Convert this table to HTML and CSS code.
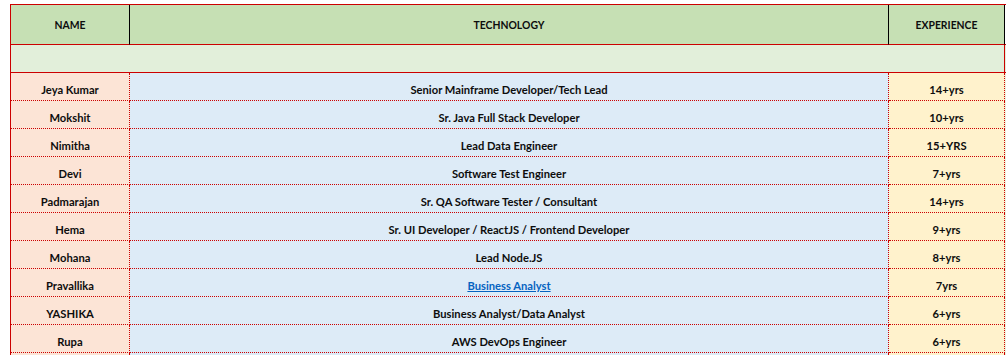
FILE: index.html
```html
<!DOCTYPE html>
<html>
<head>
<meta charset="utf-8">
<link rel="stylesheet" href="styles.css">
</head>
<body>
<div class="sheet">
  <div class="cell head c1">NAME</div>
  <div class="cell head c2">TECHNOLOGY</div>
  <div class="cell head c3">EXPERIENCE</div>
  <div class="cell head c4"></div>

  <div class="cell blank"></div>
  <div class="cell blank-x"></div>

  <div class="cell name">Jeya Kumar</div><div class="cell tech">Senior Mainframe Developer/Tech Lead</div><div class="cell exp">14+yrs</div><div class="cell extra"></div>
  <div class="cell name">Mokshit</div><div class="cell tech">Sr. Java Full Stack Developer</div><div class="cell exp">10+yrs</div><div class="cell extra"></div>
  <div class="cell name">Nimitha</div><div class="cell tech">Lead Data Engineer</div><div class="cell exp">15+YRS</div><div class="cell extra"></div>
  <div class="cell name">Devi</div><div class="cell tech">Software Test Engineer</div><div class="cell exp">7+yrs</div><div class="cell extra"></div>
  <div class="cell name">Padmarajan</div><div class="cell tech">Sr. QA Software Tester / Consultant</div><div class="cell exp">14+yrs</div><div class="cell extra"></div>
  <div class="cell name">Hema</div><div class="cell tech">Sr. UI Developer / ReactJS / Frontend Developer</div><div class="cell exp">9+yrs</div><div class="cell extra"></div>
  <div class="cell name">Mohana</div><div class="cell tech">Lead Node.JS</div><div class="cell exp">8+yrs</div><div class="cell extra"></div>
  <div class="cell name">Pravallika</div><div class="cell tech"><a class="link" href="#">Business Analyst</a></div><div class="cell exp">7yrs</div><div class="cell extra"></div>
  <div class="cell name">YASHIKA</div><div class="cell tech">Business Analyst/Data Analyst</div><div class="cell exp">6+yrs</div><div class="cell extra"></div>
  <div class="cell name">Rupa</div><div class="cell tech">AWS DevOps Engineer</div><div class="cell exp">6+yrs</div><div class="cell extra"></div>
  <div class="cell name tail"></div><div class="cell tech tail"></div><div class="cell exp tail"></div><div class="cell extra tail"></div>
</div>
</body>
</html>
```
FILE: styles.css
```css
html, body {
  margin: 0;
  padding: 0;
  background: #ffffff;
  overflow: hidden;
}
body {
  width: 1006px;
  height: 355px;
  font-family: "Lato", "Liberation Sans", sans-serif;
  font-weight: 700;
  font-size: 11.2px;
  color: #0d0d0d;
}
.sheet {
  margin: 4px 0 0 10px;
  display: grid;
  grid-template-columns: 119px 759px 116px 40px;
  grid-template-rows: 40px 28px;
  grid-auto-rows: 28px;
  border-top: 1px solid #cc0000;
  border-left: 1px solid #cc0000;
  width: 1034px;
  height: 350px;
  overflow: hidden;
}
.cell {
  display: flex;
  justify-content: center;
  align-items: flex-end;
  padding-bottom: 4px;
  line-height: 12px;
  white-space: nowrap;
  box-sizing: border-box;
}
.head {
  background: #c6e0b4;
  align-items: center;
  padding-bottom: 0;
  font-size: 10.4px;
  border-right: 1px solid #000000;
  border-bottom: 1px solid #cc0000;
}
.head.c4 {
  background: #ffffff;
  border-right: none;
}
.blank {
  grid-column: 1 / 4;
  background: #e2efda;
  border-right: 1px solid #cc0000;
  border-bottom: 1px solid #cc0000;
}
.blank-x {
  background: #e2efda;
  border-bottom: 1px solid #cc0000;
}
.name, .tech, .exp {
  border-right: 1px dotted #cc0000;
  border-bottom: 1px dotted #cc0000;
}
.name { background: #fce4d6; }
.tech { background: #ddebf7; }
.exp { background: #fff2cc; }
.extra { background: #ebf1de; }
.link {
  color: #0563c1;
  text-decoration: underline;
}
```
